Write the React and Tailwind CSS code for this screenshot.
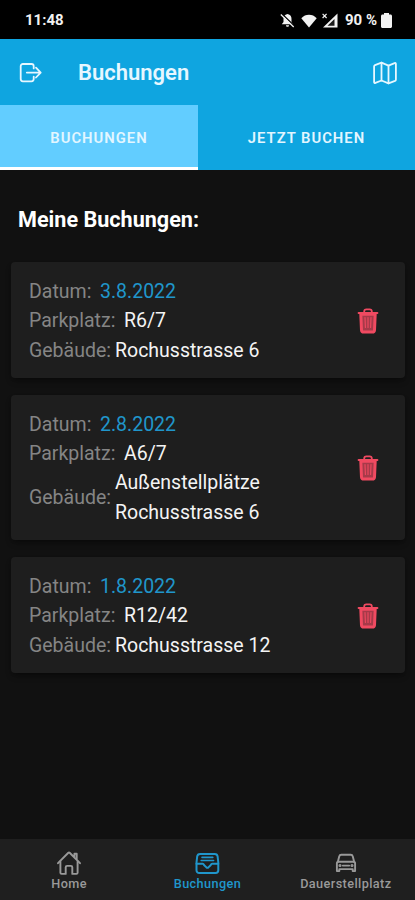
import React, { useState } from 'react';
import { clsx } from 'clsx';

const ExitIcon = () => (
  <svg width="24" height="24" viewBox="0 0 24 24" fill="none" stroke="currentColor" strokeWidth="1.8" strokeLinecap="round" strokeLinejoin="round">
    <path d="M15.700 7.400V5.200a2.200 2.200 0 0 0-2.200-2.200H4.900a2.200 2.200 0 0 0-2.200 2.200v12.900a2.200 2.200 0 0 0 2.200 2.200h8.600a2.200 2.200 0 0 0 2.200-2.200V15.700" />
    <path d="M18 6.700l4.700 4.900-4.700 4.900M8.800 11.600h13.500" />
  </svg>
);

const MapIcon = () => (
  <svg width="26" height="26" viewBox="0 0 26 26" fill="none" stroke="currentColor" strokeWidth="1.8" strokeLinecap="round" strokeLinejoin="round">
    <path d="M16.500 23.300 9.500 20.500 3.400 22.900c-.7.3-1.300-.1-1.300-.8V6.600c0-.7.3-1.200.9-1.500l6.500-2.400 7 2.900 6.100-2.500c.7-.3 1.300.1 1.300.8v15.500c0 .7-.3 1.200-.9 1.500z" />
    <path d="M9.500 2.700v17.800M16.500 5.600v17.700" />
  </svg>
);

const TrashIcon = () => (
  <svg width="22" height="28" viewBox="0 0 22 28" fill="none" stroke="currentColor" strokeLinecap="round" strokeLinejoin="round">
    <path d="M3.800 7.200h14.400l-.7 15.900a2.200 2.200 0 0 1-2.200 2H6.700a2.200 2.200 0 0 1-2.200-2z" fill="#a63a49" strokeWidth="3" />
    <path d="M1.600 6h18.800" strokeWidth="2" />
    <path d="M7.200 5.500V4.600a2.200 2.200 0 0 1 2.200-2.200h3.200a2.200 2.200 0 0 1 2.200 2.200v.9" strokeWidth="1.800" />
    <path d="M8 10.500l.4 10M11 10.500v10M14 10.500l-.4 10" strokeWidth="1.100" />
  </svg>
);

const HomeIcon = () => (
  <svg width="26" height="26" viewBox="0 0 26 26" fill="none" stroke="currentColor" strokeWidth="1.900" strokeLinecap="round" strokeLinejoin="round">
    <path d="M4.400 11.500v11.200c0 .7.5 1.200 1.200 1.200h4.100v-6.600c0-.8.6-1.400 1.400-1.400h3.800c.8 0 1.400.6 1.400 1.400v6.600h4.100c.7 0 1.200-.5 1.200-1.200V11.500" />
    <path d="M24 13.200 13.900 3a1.300 1.300 0 0 0-1.800 0L2 13.200M20.700 9.400V3.700h-2.300v3.100" />
  </svg>
);

const TrayIcon = () => (
  <svg width="26" height="26" viewBox="0 0 26 26" fill="none" stroke="currentColor" strokeWidth="2" strokeLinecap="round" strokeLinejoin="round">
    <path d="M2.500 12.500 3.200 6.400c.2-1.600 1.300-2.500 2.900-2.500h14.600c1.600 0 2.700.9 2.900 2.500l.7 6.100v7.800a2.700 2.700 0 0 1-2.700 2.700H5.200a2.700 2.700 0 0 1-2.700-2.700z" />
    <path d="M2.500 13.700h6.200c.9 0 1 .5 1.500 1.600l2.200 2.100c.6.500 1.400.500 2 0l2.200-2.100c.5-1.100.6-1.600 1.500-1.600h6.200" />
    <path d="M8 7.400h10.800M7.200 10.500h12.400" strokeWidth="1.600" />
  </svg>
);

const CarIcon = () => (
  <svg width="26" height="26" viewBox="0 0 26 26" fill="none" stroke="currentColor" strokeWidth="1.900" strokeLinecap="round" strokeLinejoin="round">
    <path d="m4.800 12 1.400-5.600c.3-1.100 1-1.600 2.100-1.600h9.400c1.100 0 1.800.5 2.100 1.600l1.400 5.600" />
    <path d="M3.900 13.300c0-1 .5-1.600 1.500-1.600h15.200c1 0 1.500.6 1.500 1.600v7.800h-2.400v-2H6.300v2H3.900z" />
    <path d="M9.800 15.600h6.400" />
    <circle cx="7" cy="15.500" r=".6" fill="currentColor" />
    <circle cx="19" cy="15.500" r=".6" fill="currentColor" />
  </svg>
);

const bookings = [
  { id: 1, date: '3.8.2022', spot: 'R6/7', building: 'Rochusstrasse 6' },
  { id: 2, date: '2.8.2022', spot: 'A6/7', building: 'Außenstellplätze Rochusstrasse 6' },
  { id: 3, date: '1.8.2022', spot: 'R12/42', building: 'Rochusstrasse 12' },
];

const navItems = [
  { label: 'Home', icon: HomeIcon },
  { label: 'Buchungen', icon: TrayIcon },
  { label: 'Dauerstellplatz', icon: CarIcon },
];

const StatusBar = () => (
  <div className="h-[39px] shrink-0 bg-black text-[#f2f2f2] flex items-center justify-between pl-[25px] pr-[23px] pt-[2px]">
    <span className="text-[15px] font-bold">11:48</span>
    <div className="flex items-center">
      <svg width="15" height="15" viewBox="0 0 15 15">
        <path d="M7.500 1c-3 .6-4 2.700-4 5v3L1.800 11.200h11.400L11.500 9V6c0-2.300-1-4.400-4-5zM6 12.200h3c0 1-.6 1.600-1.500 1.600S6 13.200 6 12.200z" fill="currentColor" />
        <path d="M1.800.8 14.500 13" stroke="#000" strokeWidth="1.300" />
        <path d="M.8 1.500 13.700 14" stroke="currentColor" strokeWidth="1.300" />
      </svg>
      <svg width="16" height="14" viewBox="0 0 16 14" className="ml-[6px]" fill="currentColor">
        <path d="M8 13.500 0.300 4.200C2.500 1.800 5 0.700 8 0.700s5.500 1.100 7.700 3.500z" />
      </svg>
      <svg width="16" height="15" viewBox="0 0 16 15" className="ml-[5px]">
        <path d="M15.500 0.500v14H1z" fill="currentColor" />
        <path d="M12.500 6v6.700H5.500z" fill="#1a1a1a" />
        <path d="M0.600 0.800l4 4.200M4.600 0.800l-4 4.200" stroke="currentColor" strokeWidth="1.200" />
      </svg>
      <span className="ml-[7px] text-[15px] font-bold whitespace-nowrap">90 %</span>
      <svg width="11" height="15" viewBox="0 0 11 15" className="ml-[4px]" fill="currentColor">
        <path d="M3 0h5v1.500h1.500c.8 0 1.500.6 1.500 1.500v10.500c0 .8-.7 1.500-1.500 1.500h-8C.7 15 0 14.300 0 13.500V3c0-.9.700-1.500 1.500-1.500H3z" />
      </svg>
    </div>
  </div>
);

const BookingCard = ({ booking }) => (
  <div className="bg-[#1e1e1e] rounded-[4px] shadow-md shadow-black/30 pt-[15px] pb-[13px] pl-[18px] pr-[26px] flex items-center justify-between">
    <div className="text-[19.5px] leading-[29.3px] text-[#f4f4f4]">
      <div className="flex">
        <span className="text-[#858585] w-[71px]">Datum:</span>
        <span className="text-[#2096cb]">{booking.date}</span>
      </div>
      <div className="flex">
        <span className="text-[#858585] w-[95px]">Parkplatz:</span>
        <span>{booking.spot}</span>
      </div>
      <div className="flex items-center">
        <span className="text-[#858585] w-[86px]">Gebäude:</span>
        <span className="w-[170px]">{booking.building}</span>
      </div>
    </div>
    <button className="text-[#f04a61]">
      <TrashIcon />
    </button>
  </div>
);

const App = () => {
  const [tab, setTab] = useState('bookings');

  return (
    <div className="h-[900px] w-full bg-[#111111] font-['Roboto',sans-serif] flex flex-col overflow-hidden">
      <StatusBar />

      <header className="bg-[#0fa5e0] shrink-0">
        <div className="h-[66px] flex items-center pl-[18px] pr-[17px] pt-px text-[#e6f7ff]">
          <ExitIcon />
          <h1 className="flex-1 ml-[36px] text-[22px] leading-[30px] font-semibold">Buchungen</h1>
          <MapIcon />
        </div>
        <div className="h-[65px] flex text-[14.800px] font-semibold tracking-[1px] text-[#e3f6ff]">
          <button
            onClick={() => setTab('bookings')}
            className={clsx('w-[198px] border-b-[3px] pt-[4px]', tab === 'bookings' ? 'bg-[#62cdff] border-white' : 'border-transparent')}
          >
            BUCHUNGEN
          </button>
          <button
            onClick={() => setTab('new')}
            className={clsx('flex-1 border-b-[3px] pt-[4px]', tab === 'new' ? 'bg-[#62cdff] border-white' : 'border-transparent')}
          >
            JETZT BUCHEN
          </button>
        </div>
      </header>

      <main className="flex-1 pl-[11px] pr-[10px]">
        <h2 className="h-[92px] pt-[33px] pl-[7px] text-[21.600px] leading-[33px] font-bold text-white">Meine Buchungen:</h2>
        <div className="flex flex-col gap-[17px]">
          {bookings.map((booking) => (
            <BookingCard key={booking.id} booking={booking} />
          ))}
        </div>
      </main>

      <nav className="h-[61px] shrink-0 bg-[#1f1f1f] grid grid-cols-3 pt-[11px]">
        {navItems.map((item) => (
          <button
            key={item.label}
            className={clsx('flex flex-col items-center', item.label === 'Buchungen' ? 'text-[#2096cb]' : 'text-[#999999]')}
          >
            <item.icon />
            <span className="text-[12.700px] leading-[15px] font-medium tracking-[0.4px]">{item.label}</span>
          </button>
        ))}
      </nav>
    </div>
  );
};

export default App;
